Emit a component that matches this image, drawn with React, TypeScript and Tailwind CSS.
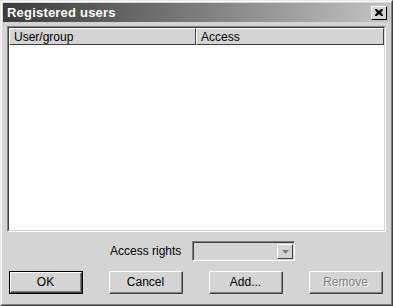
import React from "react";

function Btn({ label, primary, disabled }: { label: string; primary?: boolean; disabled?: boolean }) {
  return (
    <div className={`w-[74px] h-[23px] ${primary ? "border border-black" : ""}`}>
      <div className="w-full h-full border-t border-l border-white border-r border-b border-r-[#404040] border-b-[#404040] bg-[#d4d4d4]">
        <div className="w-full h-full border-r border-b border-[#808080] border-t-0 border-l-0 flex items-center justify-center">
          <span className={`text-[12px] leading-none ${disabled ? "text-[#808080] [text-shadow:1px_1px_0_#ffffff]" : "text-black"}`}>{label}</span>
        </div>
      </div>
    </div>
  );
}

export default function App() {
  return (
    <div className="w-[393px] h-[306px] bg-[#d4d4d4] font-['Liberation_Sans',Arial,sans-serif] border-t border-l border-[#e8e8e8] border-r border-b border-r-[#404040] border-b-[#404040]">
      <div className="w-full h-full border-r border-b border-[#808080] border-t border-l border-t-white border-l-white p-[1px] flex flex-col">
        {/* Title bar */}
        <div className="h-[19px] flex items-center justify-between pl-[4px] pr-[3px] bg-gradient-to-r from-[#3c3c3c] to-[#c4c4c4]">
          <span className="text-white font-bold text-[13px] leading-none tracking-[0.2px]">Registered users</span>
          <div className="w-[16px] h-[14px] bg-[#d4d4d4] border-t border-l border-white border-r border-b border-r-black border-b-black flex items-center justify-center">
            <svg width="8" height="7" viewBox="0 0 8 7">
              <path d="M0 0h2l2 2 2-2h2v1l-2 2.5 2 2.5v1h-2l-2-2-2 2h-2v-1l2-2.5-2-2.5z" fill="black" />
            </svg>
          </div>
        </div>

        {/* List */}
        <div className="mt-[4px] mx-[4px] h-[206px] border-t border-l border-[#808080] border-r border-b border-r-white border-b-white">
          <div className="w-full h-full border-t border-l border-[#404040] border-r border-b border-r-[#d4d4d4] border-b-[#d4d4d4] bg-white flex flex-col">
            <div className="h-[17px] flex">
              <div className="w-[187px] bg-[#d4d4d4] border-t border-l border-white border-r border-b border-r-[#404040] border-b-[#404040] flex items-center pl-[4px]">
                <span className="text-[12px] leading-none">User/group</span>
              </div>
              <div className="flex-1 bg-[#d4d4d4] border-t border-l border-white border-r border-b border-r-[#404040] border-b-[#404040] flex items-center pl-[4px]">
                <span className="text-[12px] leading-none">Access</span>
              </div>
            </div>
          </div>
        </div>

        {/* Access rights */}
        <div className="mt-[9px] flex items-center">
          <span className="ml-[107px] w-[80px] text-[12px] leading-none">Access rights</span>
          <div className="ml-[2px] w-[103px] h-[20px] border-t border-l border-[#808080] border-r border-b border-r-white border-b-white">
            <div className="w-full h-full border-t border-l border-[#404040] border-r-0 border-b-0 bg-[#d4d4d4] flex justify-end p-[1px]">
              <div className="w-[16px] h-full border-t border-l border-white border-r border-b border-r-[#404040] border-b-[#404040] bg-[#d4d4d4] flex items-center justify-center">
                <svg width="7" height="4" viewBox="0 0 7 4">
                  <path d="M0 0h7l-3.5 4z" fill="#808080" />
                </svg>
              </div>
            </div>
          </div>
        </div>

        {/* Buttons */}
        <div className="mt-[10px] flex ml-[6px] gap-[26px]">
          <Btn label="OK" primary />
          <Btn label="Cancel" />
          <Btn label="Add..." />
          <Btn label="Remove" disabled />
        </div>
      </div>
    </div>
  );
}
